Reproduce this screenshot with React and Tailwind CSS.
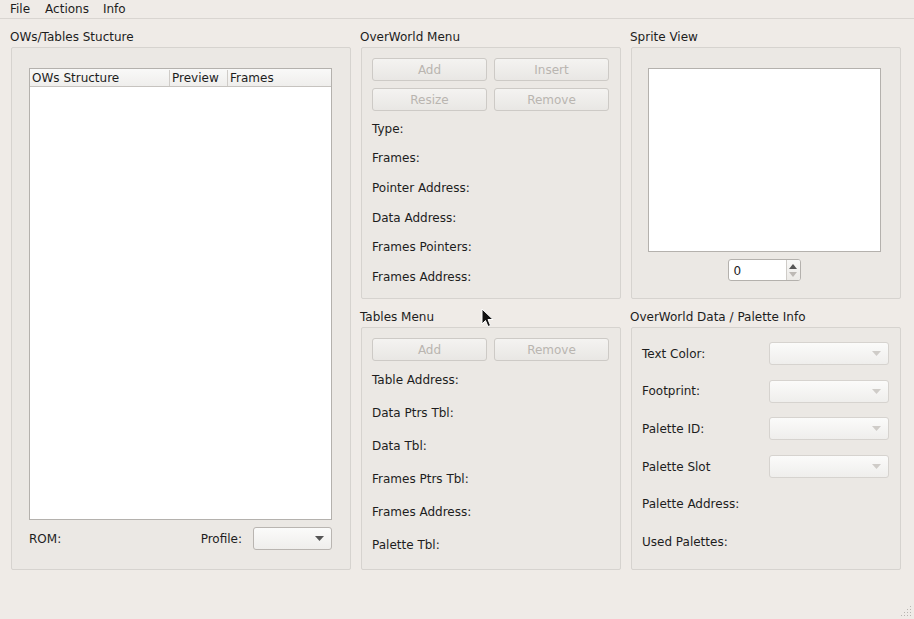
import React from 'react'

const font = { fontFamily: '"DejaVu Sans", "Liberation Sans", sans-serif' }

function Btn({ children }) {
  return (
    <div className="w-[115px] h-[23px] flex items-center justify-center rounded-[3px] border border-[#cdcac6] bg-gradient-to-b from-[#f4f3f1] to-[#e9e7e4] text-[#b9b5b0]">
      {children}
    </div>
  )
}

function Combo({ disabled, className }) {
  return (
    <div
      className={
        'h-[23px] flex items-center justify-end pr-[7px] rounded-[3px] border bg-gradient-to-b from-[#fbfbfa] to-[#efeeec] ' +
        (disabled ? 'border-[#d6d3cf] ' : 'border-[#b9b5b1] ') +
        (className || '')
      }
    >
      <svg width="9" height="5" viewBox="0 0 9 5">
        <path d="M0 0 L9 0 L4.5 5 Z" fill={disabled ? '#cfccc8' : '#555'} />
      </svg>
    </div>
  )
}

function Title({ children }) {
  return <div className="h-[19px] pt-[1px] leading-[16px] text-[#1d1d1d]">{children}</div>
}

function Box({ className, children }) {
  return (
    <div className={'border border-[#d6d3cf] rounded-[2px] bg-[#ebe8e4] ' + (className || '')}>
      {children}
    </div>
  )
}

export default function App() {
  const owRows = ['Type:', 'Frames:', 'Pointer Address:', 'Data Address:', 'Frames Pointers:', 'Frames Address:']
  const tblRows = ['Table Address:', 'Data Ptrs Tbl:', 'Data Tbl:', 'Frames Ptrs Tbl:', 'Frames Address:', 'Palette Tbl:']

  return (
    <div style={font} className="relative w-[914px] h-[619px] bg-[#efebe7] text-[12px] text-[#1d1d1d] overflow-hidden">
      {/* menu bar */}
      <div className="h-[19px] border-b border-[#d9d5d1] flex items-center pl-[10px] gap-[16px] leading-[16px]">
        <span>File</span>
        <span className="-ml-[1px]">Actions</span>
        <span className="-ml-[2px]">Info</span>
      </div>

      <div className="flex pt-[9px] pl-[10px] gap-[9px]">
        {/* column 1 */}
        <div className="w-[341px]">
          <Title>OWs/Tables Stucture</Title>
          <Box className="ml-[1px] h-[523px] pt-[20px] pl-[17px] pr-[18px]">
            <div className="h-[452px] border border-[#b4b1ad] bg-white flex flex-col">
              <div className="h-[18px] flex border-b border-[#c6c3bf] bg-gradient-to-b from-[#f9f9f8] to-[#efeeec] leading-[17px] pt-[1px]">
                <div className="w-[140px] pl-[2px] border-r border-[#cfccc8]">OWs Structure</div>
                <div className="w-[58px] pl-[2px] border-r border-[#cfccc8]">Preview</div>
                <div className="flex-1 pl-[2px]">Frames</div>
              </div>
            </div>
            <div className="mt-[7px] h-[22px] flex items-center pt-[1px]">
              <span>ROM:</span>
              <span className="ml-auto mr-[11px]">Profile:</span>
              <Combo className="w-[79px] h-[22px]" />
            </div>
          </Box>
        </div>

        {/* column 2 */}
        <div className="w-[261px]">
          <Title>OverWorld Menu</Title>
          <Box className="ml-[1px] h-[252px] pt-[10px] px-[10px]">
            <div className="flex gap-[7px]">
              <Btn>Add</Btn>
              <Btn>Insert</Btn>
            </div>
            <div className="flex gap-[7px] mt-[7px]">
              <Btn>Resize</Btn>
              <Btn>Remove</Btn>
            </div>
            <div className="mt-[3px]">
              {owRows.map((r) => (
                <div key={r} className="h-[29.6px] flex items-center">{r}</div>
              ))}
            </div>
          </Box>
          <div className="mt-[9px]">
            <Title>Tables Menu</Title>
          </div>
          <Box className="ml-[1px] h-[243px] pt-[10px] px-[10px]">
            <div className="flex gap-[7px]">
              <Btn>Add</Btn>
              <Btn>Remove</Btn>
            </div>
            <div className="mt-[2px]">
              {tblRows.map((r) => (
                <div key={r} className="h-[33px] flex items-center">{r}</div>
              ))}
            </div>
          </Box>
        </div>

        {/* column 3 */}
        <div className="w-[271px]">
          <Title>Sprite View</Title>
          <Box className="ml-[1px] h-[252px] pt-[20px] flex flex-col items-center">
            <div className="w-[233px] h-[184px] bg-white border border-[#b4b1ad] ml-[-4px]" />
            <div className="mt-[7px] ml-[-4px] w-[73px] h-[22px] flex border border-[#b4b1ad] rounded-[3px] bg-white overflow-hidden">
              <div className="flex-1 pl-[5px] flex items-center pt-[1px]">0</div>
              <div className="w-[14px] border-l border-[#cfccc8] bg-gradient-to-b from-[#f8f8f7] to-[#eceae7] flex flex-col items-center justify-center gap-[3px]">
                <svg width="8" height="5" viewBox="0 0 8 5">
                  <path d="M0 5 L8 5 L4 0 Z" fill="#555" />
                </svg>
                <svg width="8" height="5" viewBox="0 0 8 5">
                  <path d="M0 0 L8 0 L4 5 Z" fill="#bdb9b5" />
                </svg>
              </div>
            </div>
          </Box>
          <div className="mt-[9px]">
            <Title>OverWorld Data / Palette Info</Title>
          </div>
          <Box className="ml-[1px] h-[243px] pt-[7px] pl-[10px] pr-[11px]">
            {['Text Color:', 'Footprint:', 'Palette ID:', 'Palette Slot'].map((r) => (
              <div key={r} className="h-[37.6px] flex items-center">
                <span>{r}</span>
                <Combo disabled className="ml-auto w-[120px]" />
              </div>
            ))}
            {['Palette Address:', 'Used Palettes:'].map((r) => (
              <div key={r} className="h-[37.6px] flex items-center">{r}</div>
            ))}
          </Box>
        </div>
      </div>

      {/* size grip */}
      <svg className="absolute right-[2px] bottom-[2px]" width="12" height="12" viewBox="0 0 12 12">
        {[[10, 1], [7, 4], [10, 4], [4, 7], [7, 7], [10, 7], [1, 10], [4, 10], [7, 10], [10, 10]].map(([x, y]) => (
          <rect key={x + '-' + y} x={x} y={y} width="1" height="1" fill="#b8b4b0" />
        ))}
      </svg>

      {/* mouse cursor */}
      <svg className="absolute left-[481px] top-[308px]" width="14" height="20" viewBox="0 0 14 20">
        <path d="M1 1 L1 16 L4.5 12.5 L7 18.5 L9.5 17.5 L7 11.5 L12 11.5 Z" fill="#111" stroke="#fff" strokeWidth="1" />
      </svg>
    </div>
  )
}
